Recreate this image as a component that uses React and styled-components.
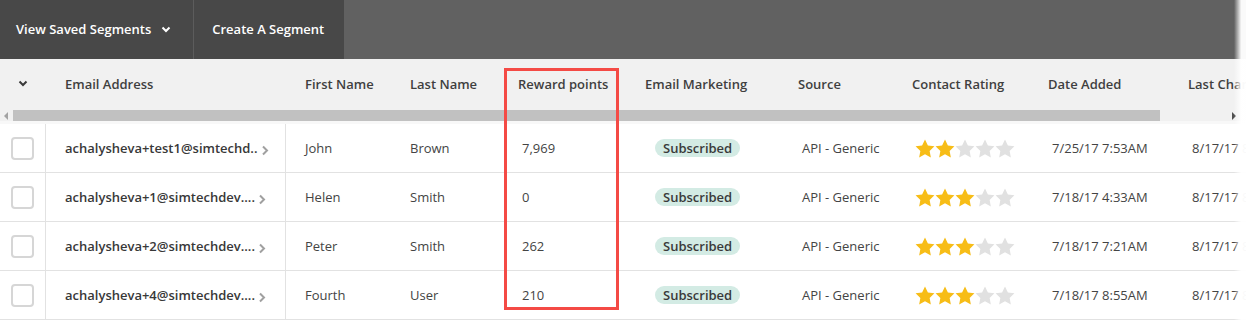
import React from 'react';
import styled, { createGlobalStyle } from 'styled-components';

const GlobalStyle = createGlobalStyle`
  body {
    margin: 0;
    font-family: 'Open Sans', 'Liberation Sans', sans-serif;
    background: #fff;
  }
`;

const COLS = '46px 240px 105px 108px 127px 153px 114px 136px 140px 200px';

const contacts = [
  { email: 'achalysheva+test1@simtechd..', first: 'John', last: 'Brown', points: '7,969', rating: 2, added: '7/25/17 7:53AM' },
  { email: 'achalysheva+1@simtechdev....', first: 'Helen', last: 'Smith', points: '0', rating: 3, added: '7/18/17 4:33AM' },
  { email: 'achalysheva+2@simtechdev....', first: 'Peter', last: 'Smith', points: '262', rating: 3, added: '7/18/17 7:21AM' },
  { email: 'achalysheva+4@simtechdev....', first: 'Fourth', last: 'User', points: '210', rating: 3, added: '7/18/17 8:55AM' },
];

const headers = ['Email Address', 'First Name', 'Last Name', 'Reward points', 'Email Marketing', 'Source', 'Contact Rating', 'Date Added', 'Last Changed'];

const Star = ({ on }) => (
  <svg width="20" height="19" viewBox="0 0 24 23">
    <path
      d="M12 0.6l3.5 7.3 7.9 1-5.8 5.5 1.5 7.9L12 18.5l-7.1 3.8 1.5-7.9L0.6 8.9l7.9-1z"
      fill={on ? '#f7bd17' : '#e1e1e1'}
    />
  </svg>
);

const App = () => {
  return (
    <Page>
      <GlobalStyle />
      <TopBar>
        <NavButton $divider>
          View Saved Segments
          <svg width="10" height="7" viewBox="0 0 10 7">
            <path d="M1.5 1.5 5 5l3.5-3.5" fill="none" stroke="#fff" strokeWidth="2" />
          </svg>
        </NavButton>
        <NavButton>Create A Segment</NavButton>
      </TopBar>

      <Table>
        <HeaderRow>
          <HeadCell $center>
            <svg width="10" height="7" viewBox="0 0 10 7">
              <path d="M1.5 1.5 5 5l3.5-3.5" fill="none" stroke="#3a3a3a" strokeWidth="2" />
            </svg>
          </HeadCell>
          {headers.map((h) => (
            <HeadCell key={h}>{h}</HeadCell>
          ))}
        </HeaderRow>

        <ScrollBar>
          <Arrow $side="left" />
          <Thumb />
          <Arrow $side="right" />
        </ScrollBar>

        {contacts.map((c) => (
          <Row key={c.email}>
            <CheckCell>
              <Checkbox />
            </CheckCell>
            <EmailCell>
              <span>{c.email}</span>
              <svg width="8" height="11" viewBox="0 0 8 11">
                <path d="M2 1.5 6 5.5l-4 4" fill="none" stroke="#a0a0a0" strokeWidth="2" />
              </svg>
            </EmailCell>
            <Cell>{c.first}</Cell>
            <Cell>{c.last}</Cell>
            <Cell $shift>{c.points}</Cell>
            <Cell $shift="29px">
              <Badge>Subscribed</Badge>
            </Cell>
            <Cell $shift>API - Generic</Cell>
            <Cell $shift>
              <Stars>
                {[1, 2, 3, 4, 5].map((n) => (
                  <Star key={n} on={n <= c.rating} />
                ))}
              </Stars>
            </Cell>
            <Cell $shift>{c.added}</Cell>
            <Cell $shift>8/17/17 8:33AM</Cell>
          </Row>
        ))}

        <Highlight />
      </Table>
      <EdgeFade />
    </Page>
  );
};

export default App;

const Page = styled.div`
  position: relative;
  width: 1246px;
  height: 322px;
  overflow: hidden;
`;

const TopBar = styled.div`
  display: flex;
  height: 59px;
  background: #616161;
`;

const NavButton = styled.div`
  display: flex;
  align-items: center;
  gap: 10px;
  padding: 0 19px 2px ${(p) => (p.$divider ? '16px' : '18px')};
  padding-right: ${(p) => (p.$divider ? '22px' : '19px')};
  background: #484848;
  color: #fff;
  font-size: 13px;
  font-weight: 600;
  border-right: 1px solid ${(p) => (p.$divider ? '#5c5c5c' : '#484848')};
  svg {
    margin-top: 1px;
  }
`;

const Table = styled.div`
  position: relative;
  width: 1246px;
`;

const HeaderRow = styled.div`
  display: grid;
  grid-template-columns: ${COLS};
  height: 50px;
  background: #f1f1f1;
  white-space: nowrap;
`;

const HeadCell = styled.div`
  display: flex;
  align-items: center;
  justify-content: ${(p) => (p.$center ? 'center' : 'flex-start')};
  padding-left: ${(p) => (p.$center ? '0' : '19px')};
  padding-bottom: 1px;
  font-size: 13px;
  font-weight: 600;
  color: #3f3f3f;
  overflow: hidden;
`;

const ScrollBar = styled.div`
  display: flex;
  align-items: center;
  height: 11px;
  padding-top: 1px;
  background: #f1f1f1;
  border-bottom: 3px solid #f8f8f8;
`;

const Arrow = styled.div`
  width: 0;
  height: 0;
  border-top: 4px solid transparent;
  border-bottom: 4px solid transparent;
  ${(p) =>
    p.$side === 'left'
      ? 'border-right: 4px solid #a3a3a3; margin: 0 5px 0 4px;'
      : 'border-left: 4px solid #505050; margin-left: 72px;'}
`;

const Thumb = styled.div`
  width: 1147px;
  height: 11px;
  background: #c1c1c1;
`;

const Row = styled.div`
  display: grid;
  grid-template-columns: ${COLS};
  height: 48px;
  border-bottom: 1px solid #e2e2e2;
  white-space: nowrap;
`;

const Cell = styled.div`
  display: flex;
  align-items: center;
  padding-left: ${(p) => (p.$shift === true ? '23px' : p.$shift || '19px')};
  font-size: 13px;
  color: #444;
  overflow: hidden;
`;

const CheckCell = styled.div`
  display: flex;
  align-items: center;
  justify-content: center;
  border-right: 1px solid #e2e2e2;
`;

const Checkbox = styled.div`
  width: 19px;
  height: 19px;
  border: 2px solid #d6d6d6;
  border-radius: 4px;
  background: #fff;
`;

const EmailCell = styled.div`
  display: flex;
  align-items: center;
  gap: 3px;
  padding-left: 19px;
  font-size: 13px;
  font-weight: 600;
  color: #383838;
  border-right: 1px solid #e2e2e2;
  overflow: hidden;
  svg {
    margin-top: 4px;
  }
`;

const Badge = styled.span`
  display: inline-block;
  padding: 0 8px;
  height: 18px;
  line-height: 18px;
  border-radius: 9px;
  background: #d3ebe4;
  color: #3a3a3a;
  font-weight: 600;
  font-size: 13px;
`;

const Stars = styled.div`
  display: flex;
  margin-left: -1px;
`;

const Highlight = styled.div`
  position: absolute;
  left: 504px;
  top: 9px;
  width: 109px;
  height: 236px;
  border: 3px solid #f44a45;
  pointer-events: none;
`;

const EdgeFade = styled.div`
  position: absolute;
  top: 0;
  right: 0;
  width: 12px;
  height: 100%;
  background: linear-gradient(to right, rgba(255, 255, 255, 0), rgba(255, 255, 255, 0.97) 60%);
  pointer-events: none;
`;
